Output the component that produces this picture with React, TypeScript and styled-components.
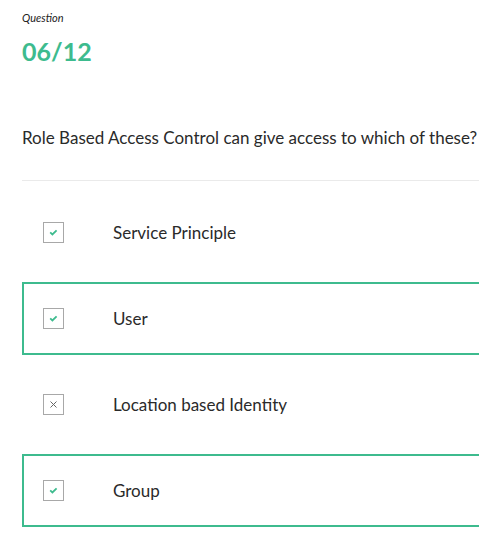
import React from "react";
import styled, { createGlobalStyle } from "styled-components";

const GlobalStyle = createGlobalStyle`
  html, body {
    margin: 0;
    padding: 0;
    background: #ffffff;
    overflow: hidden;
  }
  body {
    font-family: Lato, "Open Sans", Arial, sans-serif;
    color: #2a2a2a;
  }
`;

const Page = styled.div`
  padding: 10px 0 0 22px;
  width: 500px;
`;

const Label = styled.div`
  font-size: 11px;
  font-style: italic;
  color: #222;
  line-height: 16px;
`;

const Counter = styled.div`
  margin-top: 10px;
  font-size: 25px;
  font-weight: 700;
  color: #3dbb8e;
  line-height: 30px;
`;

const QuestionText = styled.div`
  margin-top: 61px;
  font-size: 17px;
  font-weight: 400;
  line-height: 22px;
  color: #2a2a2a;
`;

const Divider = styled.hr`
  margin: 31px 0 0;
  border: none;
  border-top: 1px solid #eaeaea;
`;

const Options = styled.div`
  display: flex;
  flex-direction: column;
  gap: 13px;
  margin-top: 15px;
`;

const Option = styled.div<{ $selected: boolean }>`
  display: flex;
  align-items: center;
  height: 73px;
  box-sizing: border-box;
  padding-left: 19px;
  border: 2px solid ${({ $selected }) => ($selected ? "#3dbb8e" : "transparent")};
`;

const Box = styled.span`
  width: 21px;
  height: 21px;
  box-sizing: border-box;
  border: 1px solid #a8a8a8;
  display: flex;
  align-items: center;
  justify-content: center;
  flex-shrink: 0;
`;

const OptionText = styled.span`
  margin-left: 49px;
  font-size: 17px;
  font-weight: 400;
  color: #2a2a2a;
`;

const Check = () => (
  <svg width="11" height="11" viewBox="0 0 11 11">
    <path d="M2.2 5.4 L4.4 7.4 L8.6 3.4" fill="none" stroke="#3dbb8e" strokeWidth="1.8" />
  </svg>
);

const Cross = () => (
  <svg width="11" height="11" viewBox="0 0 11 11">
    <path d="M2.5 2.5 L8.5 8.5 M8.5 2.5 L2.5 8.5" fill="none" stroke="#666" strokeWidth="1" />
  </svg>
);

const options = [
  { text: "Service Principle", correct: true, selected: false },
  { text: "User", correct: true, selected: true },
  { text: "Location based Identity", correct: false, selected: false },
  { text: "Group", correct: true, selected: true },
];

export default function App() {
  return (
    <>
      <GlobalStyle />
      <Page>
        <Label>Question</Label>
        <Counter>06/12</Counter>
        <QuestionText>Role Based Access Control can give access to which of these?</QuestionText>
        <Divider />
        <Options>
          {options.map((o) => (
            <Option key={o.text} $selected={o.selected}>
              <Box>{o.correct ? <Check /> : <Cross />}</Box>
              <OptionText>{o.text}</OptionText>
            </Option>
          ))}
        </Options>
      </Page>
    </>
  );
}
